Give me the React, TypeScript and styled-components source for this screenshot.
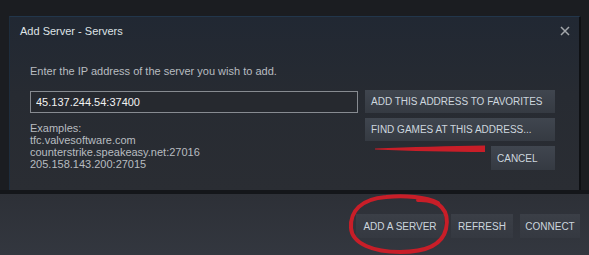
import React from 'react';
import styled, { createGlobalStyle } from 'styled-components';

const GlobalStyle = createGlobalStyle`
    body {
        margin: 0;
        background: #1b1d21;
        font-family: "Liberation Sans", Arial, sans-serif;
    }
`
const Page = styled.div`
    position: relative;
    width: 589px;
    height: 255px;
    display: flex;
    flex-direction: column;
    overflow: hidden;
`
const Backdrop = styled.div`
    height: 174px;
    padding: 16px 0 0 9px;
    background: #1b1d21;
    border-bottom: 4px solid #14161a;
`
const Dialog = styled.div`
    box-sizing: border-box;
    width: 572px;
    height: 174px;
    background: linear-gradient(to bottom, #212833 0%, #272b32 45%, #2a2d33 100%);
    border-top: 1px solid #22364b;
    border-left: 1px solid #1e2d3d;
    border-right: 2px solid #0e1013;
    display: flex;
    flex-direction: column;
`
const TitleBar = styled.div`
    display: flex;
    justify-content: space-between;
    align-items: center;
    padding: 7px 9px 0 10px;
    height: 14px;
`
const Title = styled.div`
    font-size: 11px;
    line-height: 14px;
    color: #dfe3e6;
`
const CloseButton = styled.button`
    display: flex;
    padding: 0;
    border: 0;
    background: none;
    cursor: pointer;
`
const Body = styled.div`
    padding: 27px 0 0 20px;
`
const Prompt = styled.div`
    font-size: 11px;
    line-height: 13px;
    color: #b8bcc0;
`
const FormRow = styled.div`
    display: flex;
    gap: 7px;
    margin-top: 12px;
`
const LeftColumn = styled.div`
    width: 328px;
    padding-top: 1px;
`
const AddressInput = styled.input`
    box-sizing: border-box;
    width: 328px;
    height: 22px;
    margin: 0;
    padding: 0 5px;
    border: 1px solid #878b91;
    background: #26292f;
    color: #f2f2f2;
    font-family: "Liberation Sans", Arial, sans-serif;
    font-size: 11px;
    outline: none;
`
const Examples = styled.div`
    margin-top: 9px;
    font-size: 11px;
    line-height: 12px;
    color: #b8bcc0;
`
const ButtonColumn = styled.div`
    display: flex;
    flex-direction: column;
    align-items: flex-end;
    gap: 5px;
    width: 190px;
`
const DialogButton = styled.button<{ $h?: number; $w?: number }>`
    box-sizing: border-box;
    width: ${p => (p.$w ? p.$w + 'px' : '100%')};
    height: ${p => p.$h || 23}px;
    padding: 0 6px;
    border: 0;
    text-align: left;
    background: linear-gradient(to bottom, #40464f, #353a42);
    color: #cdd6de;
    font-family: "Liberation Sans", Arial, sans-serif;
    font-size: 10px;
    cursor: pointer;
`
const BottomBar = styled.div`
    flex: 1;
    display: flex;
    justify-content: flex-end;
    align-items: flex-start;
    gap: 7px;
    padding: 20px 9px 0 0;
    background: linear-gradient(to bottom, #2d3037, #33373f);
`
const BarButton = styled.button<{ $w: number }>`
    box-sizing: border-box;
    width: ${p => p.$w}px;
    height: 24px;
    padding: 0;
    border: 0;
    background: linear-gradient(to bottom, #3b3f47, #353941);
    color: #cdd6de;
    font-family: "Liberation Sans", Arial, sans-serif;
    font-size: 10px;
    cursor: pointer;
`
const Marks = styled.svg`
    position: absolute;
    left: 0;
    top: 0;
    pointer-events: none;
`

const App: React.FC = () => {
    return <>
    <GlobalStyle />
    <Page>
        <Backdrop>
            <Dialog>
                <TitleBar>
                    <Title>Add Server - Servers</Title>
                    <CloseButton aria-label="Close">
                        <svg width="10" height="10" viewBox="0 0 10 10">
                            <path d="M1 1 L9 9 M9 1 L1 9" stroke="#a3a7ab" strokeWidth="1.5" />
                        </svg>
                    </CloseButton>
                </TitleBar>
                <Body>
                    <Prompt>Enter the IP address of the server you wish to add.</Prompt>
                    <FormRow>
                        <LeftColumn>
                            <AddressInput defaultValue="45.137.244.54:37400" />
                            <Examples>
                                Examples:<br />
                                tfc.valvesoftware.com<br />
                                counterstrike.speakeasy.net:27016<br />
                                205.158.143.200:27015
                            </Examples>
                        </LeftColumn>
                        <ButtonColumn>
                            <DialogButton>ADD THIS ADDRESS TO FAVORITES</DialogButton>
                            <DialogButton>FIND GAMES AT THIS ADDRESS...</DialogButton>
                            <DialogButton $w={64} $h={24}>CANCEL</DialogButton>
                        </ButtonColumn>
                    </FormRow>
                </Body>
            </Dialog>
        </Backdrop>
        <BottomBar>
            <BarButton $w={88}>ADD A SERVER</BarButton>
            <BarButton $w={62}>REFRESH</BarButton>
            <BarButton $w={60}>CONNECT</BarButton>
        </BottomBar>
        {/* red marker annotations drawn over the screenshot */}
        <Marks width="589" height="255" viewBox="0 0 589 255">
            <path d="M375 148.5 C 410 147, 450 146, 485 145.5 L 485 152 C 450 152, 410 151, 375 149.5 Z" fill="#c81e28" />
            <path d="M418 200 C 440 199, 450 211, 446 229 C 442 246, 424 252, 400 252 C 374 252, 352 244, 351 228 C 350 211, 361 199, 386 197 C 405 195, 426 197, 438 203"
                fill="none" stroke="#c81e28" strokeWidth="4" strokeLinecap="round" />
        </Marks>
    </Page>
    </>
}

export default App;
